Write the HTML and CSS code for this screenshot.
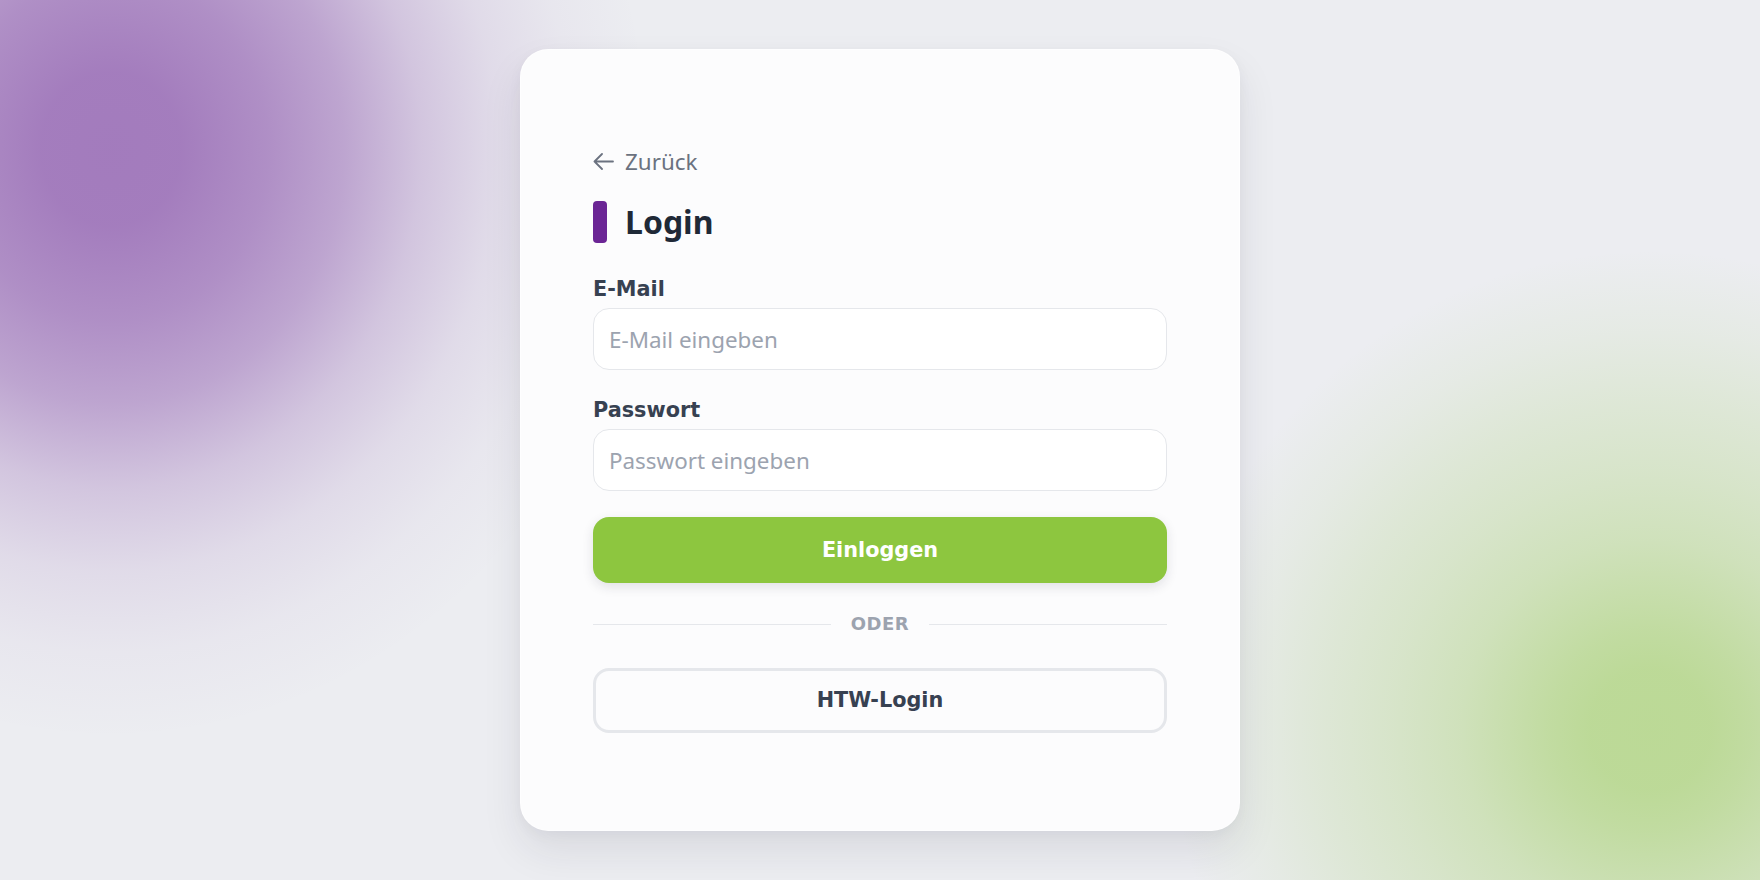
FILE: index.html
```html
<!DOCTYPE html>
<html lang="de">
<head>
  <meta charset="UTF-8" />
  <title>Login</title>
  <meta name="viewport" content="width=device-width, initial-scale=1" />
  <link rel="stylesheet" href="styles.css">
</head>
<body>
  <div class="card">
    <a class="back" href="#">
      <svg width="21" height="17" viewBox="0 0 21 17" fill="none" stroke="currentColor" stroke-width="1.8" stroke-linecap="round" stroke-linejoin="round">
        <path d="M20 8.5H1.5M9 1L1.5 8.5 9 16" />
      </svg>
      Zurück
    </a>
    <h1 class="title"><span class="title-bar"></span>Login</h1>
    <form class="login-form">
      <label class="field">
        <span class="field-label">E-Mail</span>
        <input type="email" name="email" placeholder="E-Mail eingeben">
      </label>
      <label class="field">
        <span class="field-label">Passwort</span>
        <input type="password" name="passwort" placeholder="Passwort eingeben">
      </label>
      <button type="submit" class="btn-primary">Einloggen</button>
      <div class="divider"><span>ODER</span></div>
      <button type="button" class="btn-outline">HTW-Login</button>
    </form>
  </div>
</body>
</html>
```

FILE: styles.css
```css
body {
  font-family: 'Noto Sans', sans-serif;
  background:
    radial-gradient(ellipse 540px 590px at 111px 149px,
      rgba(107, 37, 149, 0.57) 0,
      rgba(107, 37, 149, 0.56) 70px,
      rgba(107, 37, 149, 0.47) 157px,
      rgba(107, 37, 149, 0.36) 233px,
      rgba(107, 37, 149, 0.2) 310px,
      rgba(107, 37, 149, 0.09) 386px,
      rgba(107, 37, 149, 0.03) 460px,
      rgba(107, 37, 149, 0) 540px),
    radial-gradient(circle 480px at 1650px 730px,
      rgba(141, 198, 63, 0.51) 0,
      rgba(141, 198, 63, 0.5) 60px,
      rgba(141, 198, 63, 0.45) 100px,
      rgba(141, 198, 63, 0.3) 190px,
      rgba(141, 198, 63, 0.22) 260px,
      rgba(141, 198, 63, 0.15) 330px,
      rgba(141, 198, 63, 0.07) 400px,
      rgba(141, 198, 63, 0) 480px),
    #ecedf1;
  display: flex;
  justify-content: center;
  align-items: center;
  height: 100vh;
  margin: 0;
}
.card {
  box-sizing: border-box;
  width: 720px;
  background: #fcfcfd;
  border: 1px solid rgba(255, 255, 255, 0.7);
  border-radius: 28px;
  padding: 96px 72px 97px;
  box-shadow: 0 20px 40px rgba(30, 35, 60, 0.09), 0 4px 14px rgba(30, 35, 60, 0.04);
}
.back {
  display: inline-flex;
  align-items: center;
  gap: 11px;
  color: #6b7280;
  font-size: 22.4px;
  text-decoration: none;
}
.title {
  display: flex;
  align-items: center;
  gap: 18px;
  margin: 23px 0 0;
  font-size: 32px;
  font-weight: 700;
  color: #1f2937;
}
.title-bar {
  width: 14px;
  height: 42px;
  border-radius: 4px;
  background: #6b2595;
}
.login-form {
  margin-top: 29px;
}
.field {
  display: block;
  margin-bottom: 23px;
}
.field-label {
  display: block;
  padding-top: 2px;
  margin-bottom: 4px;
  font-family: 'DejaVu Sans', sans-serif;
  font-size: 20.8px;
  line-height: 30px;
  font-weight: 700;
  color: #374151;
}
input {
  box-sizing: border-box;
  display: block;
  width: 100%;
  height: 62px;
  padding: 0 15px;
  border: 1px solid #e5e7eb;
  border-radius: 16px;
  background: #fff;
  font-family: inherit;
  font-size: 22.4px;
  color: #1f2937;
}
input::placeholder {
  color: #9ca3af;
}
input:focus {
  outline: none;
  border-color: #8dc63f;
}
.btn-primary,
.btn-outline {
  box-sizing: border-box;
  display: block;
  width: 100%;
  border-radius: 16px;
  font-family: 'DejaVu Sans', sans-serif;
  font-size: 20.8px;
  font-weight: 700;
  cursor: pointer;
}
.btn-primary {
  height: 66px;
  margin-top: 26px;
  border: none;
  background: #8dc63f;
  color: #fff;
  box-shadow: 0 4px 12px rgba(30, 35, 60, 0.12);
}
.btn-outline {
  height: 65px;
  border: 3px solid #e5e7eb;
  background: transparent;
  color: #374151;
}
.divider {
  display: flex;
  align-items: center;
  gap: 20px;
  margin: 29px 0 31px;
  color: #9ca3af;
  font-family: 'DejaVu Sans', sans-serif;
  font-size: 18px;
  line-height: 24.5px;
  font-weight: 700;
  letter-spacing: 0.5px;
}
.divider::before,
.divider::after {
  content: "";
  flex: 1;
  height: 1px;
  background: #e5e7eb;
}
```
